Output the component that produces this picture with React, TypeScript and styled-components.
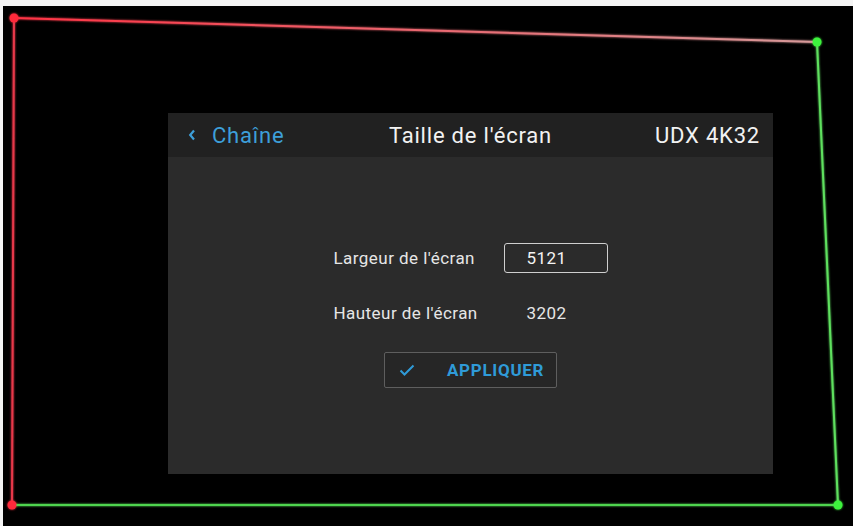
import React from 'react';
import styled, { createGlobalStyle } from 'styled-components';

const GlobalStyle = createGlobalStyle`
  html, body {
    margin: 0;
    padding: 0;
    background: #f4f4f4;
    font-family: Roboto, "Liberation Sans", sans-serif;
  }
`;

const Stage = styled.div`
  position: relative;
  margin: 6px 0 0 3px;
  width: 850px;
  height: 520px;
  background: #000;
  padding: 107px 0 0 165px;
  box-sizing: border-box;
  overflow: hidden;
`;

const Outline = styled.svg`
  position: absolute;
  left: 0;
  top: 0;
  pointer-events: none;
`;

const Panel = styled.div`
  width: 605px;
  height: 361px;
  background: #2b2b2b;
  display: flex;
  flex-direction: column;
`;

const Header = styled.div`
  height: 44px;
  background: #212121;
  display: grid;
  grid-template-columns: 1fr auto 1fr;
  align-items: center;
  padding: 0 13px;
  font-size: 22px;
  letter-spacing: 0.8px;
`;

const Back = styled.div`
  display: flex;
  align-items: center;
  gap: 16px;
  margin-left: 7px;
  color: #3d9fd9;
`;

const Title = styled.div`
  color: #f2f2f2;
`;

const Device = styled.div`
  color: #f2f2f2;
  text-align: right;
`;

const Body = styled.div`
  flex: 1;
  display: flex;
  flex-direction: column;
  align-items: center;
  padding-top: 86px;
`;

const Form = styled.div`
  display: grid;
  grid-template-columns: 170px 104px;
  grid-auto-rows: 30px;
  row-gap: 25px;
  align-items: center;
  font-size: 17px;
  letter-spacing: 0.45px;
  color: #e6e6e6;
`;

const Label = styled.div`
  white-space: nowrap;
`;

const Field = styled.input`
  box-sizing: border-box;
  width: 104px;
  height: 30px;
  background: transparent;
  border: 1.5px solid #cfcfcf;
  border-radius: 3px;
  color: #f4f4f4;
  font: 400 17px Roboto, "Liberation Sans", sans-serif;
  letter-spacing: 0.45px;
  padding: 0 0 0 22px;
  outline: none;
`;

const Value = styled.div`
  padding-left: 23px;
`;

const Apply = styled.button`
  margin-top: 24px;
  box-sizing: border-box;
  width: 173px;
  height: 36px;
  display: flex;
  align-items: center;
  gap: 32px;
  padding: 0 0 0 14px;
  background: #262626;
  border: 1px solid #5e5e5e;
  border-radius: 2px;
  color: #2f9bd8;
  font: 700 17px Roboto, "Liberation Sans", sans-serif;
  letter-spacing: 0.7px;
`;

const App = () => (
  <>
    <GlobalStyle />
    <Stage>
      <Outline width="850" height="520" viewBox="0 0 850 520">
        <defs>
          <linearGradient id="topEdge" x1="0" y1="0" x2="1" y2="0">
            <stop offset="0" stopColor="#ff3344" />
            <stop offset="1" stopColor="#d69a9a" />
          </linearGradient>
          <filter id="glow" x="-10%" y="-10%" width="120%" height="120%">
            <feGaussianBlur stdDeviation="1.2" result="b" />
            <feMerge>
              <feMergeNode in="b" />
              <feMergeNode in="SourceGraphic" />
            </feMerge>
          </filter>
        </defs>
        <g filter="url(#glow)" strokeWidth="2" strokeLinecap="round">
          <line x1="11" y1="12" x2="814" y2="36" stroke="url(#topEdge)" />
          <line x1="11" y1="12" x2="9" y2="499" stroke="#e8384a" />
          <line x1="9" y1="499" x2="835" y2="499" stroke="#4fd54f" />
          <line x1="814" y1="36" x2="835" y2="499" stroke="#5ee05e" />
          <circle cx="11" cy="12" r="4.5" fill="#ff2b3b" stroke="none" />
          <circle cx="9" cy="499" r="4.5" fill="#ff2b3b" stroke="none" />
          <circle cx="814" cy="36" r="4.5" fill="#3df23d" stroke="none" />
          <circle cx="835" cy="499" r="4.5" fill="#3df23d" stroke="none" />
        </g>
      </Outline>
      <Panel>
        <Header>
          <Back>
            <svg width="8" height="12" viewBox="0 0 8 12">
              <path d="M6 1.5 L2.2 6 L6 10.5" fill="none" stroke="#3d9fd9" strokeWidth="2.2" />
            </svg>
            <span>Chaîne</span>
          </Back>
          <Title>Taille de l'écran</Title>
          <Device>UDX 4K32</Device>
        </Header>
        <Body>
          <Form>
            <Label>Largeur de l'écran</Label>
            <Field defaultValue="5121" />
            <Label>Hauteur de l'écran</Label>
            <Value>3202</Value>
          </Form>
          <Apply>
            <svg width="16" height="12" viewBox="0 0 16 12">
              <path d="M1.5 6.5 L5.5 10.5 L14.5 1.5" fill="none" stroke="#2f9bd8" strokeWidth="2" />
            </svg>
            APPLIQUER
          </Apply>
        </Body>
      </Panel>
    </Stage>
  </>
);

export default App;
